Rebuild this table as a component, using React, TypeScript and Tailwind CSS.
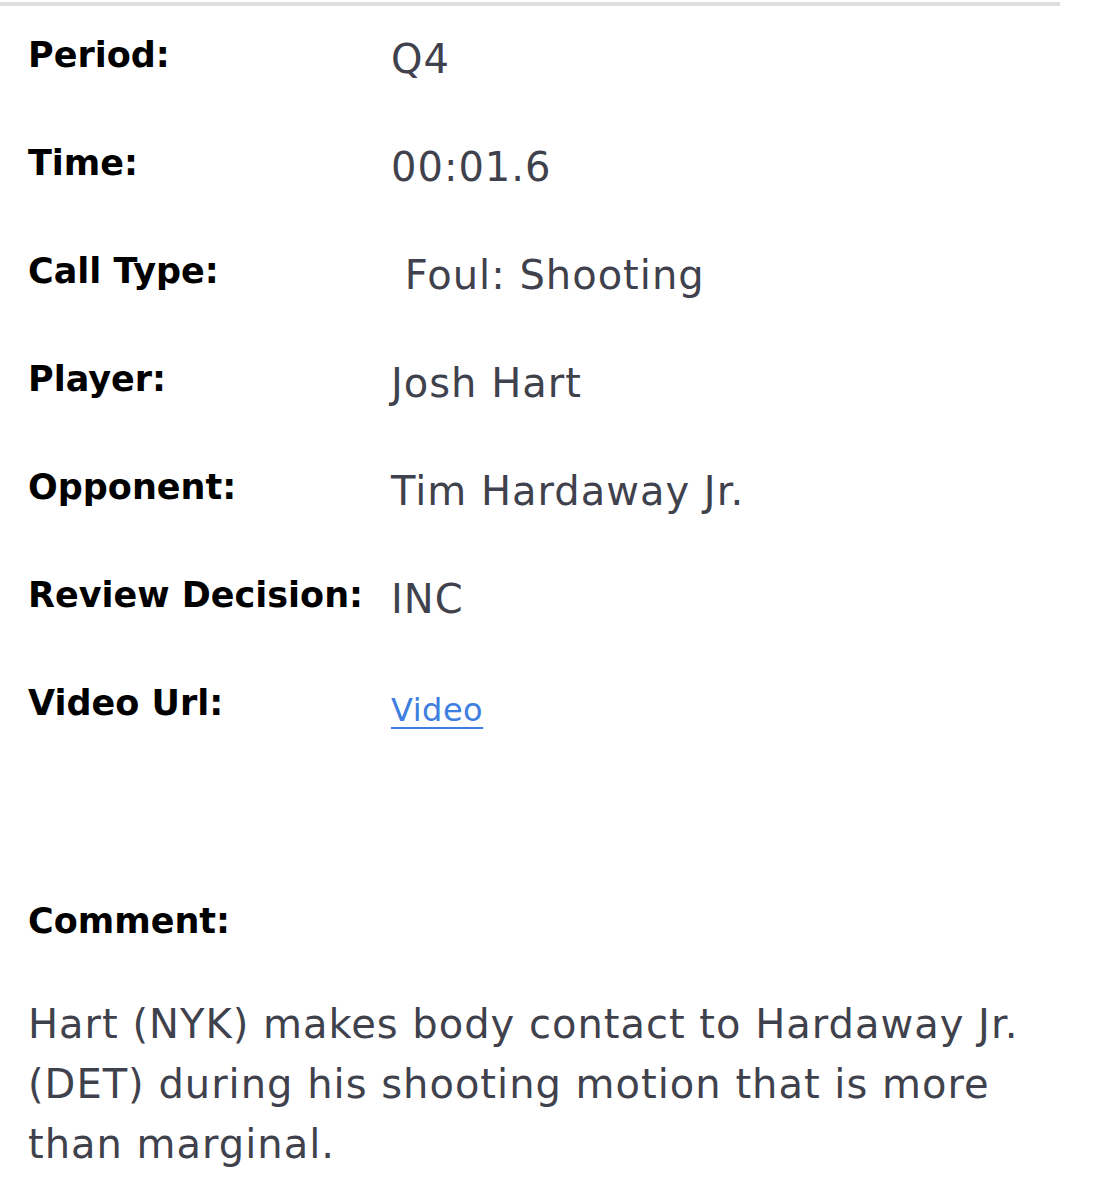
const rows: { label: string; value: string; link?: boolean }[] = [
  { label: "Period:", value: "Q4" },
  { label: "Time:", value: "00:01.6" },
  { label: "Call Type:", value: "\u00a0Foul: Shooting" },
  { label: "Player:", value: "Josh Hart" },
  { label: "Opponent:", value: "Tim Hardaway Jr." },
  { label: "Review Decision:", value: "INC" },
  { label: "Video Url:", value: "Video", link: true },
];

function DetailRow({ label, value, link }: { label: string; value: string; link?: boolean }) {
  return (
    <div className="flex h-[108px] items-start">
      <div className="w-[363px] shrink-0 text-[35px] leading-[44px] font-bold text-black">{label}</div>
      {link ? (
        <a
          href="#"
          className="mt-[9px] text-[32px] leading-[40px] tracking-[0.5px] text-[#3d7ee0] underline decoration-2 underline-offset-[6px]"
        >
          {value}
        </a>
      ) : (
        <div className="mt-[2px] text-[40px] leading-[48px] tracking-[1px] text-[#3f424c]">{value}</div>
      )}
    </div>
  );
}

export default function App() {
  return (
    <div className="min-h-[1190px] bg-white font-['DejaVu_Sans',sans-serif]">
      <div className="pt-0.5">
        <div className="h-1 w-[1060px] bg-[#dedede]" />
      </div>
      <div className="px-7 pt-[27px]">
        {rows.map((r) => (
          <DetailRow key={r.label} {...r} />
        ))}
        <div className="mt-[110px] text-[35px] leading-[44px] font-bold text-black">Comment:</div>
        <p className="mt-[51px] w-[1040px] text-[40px] leading-[60px] tracking-[1px] text-[#3f424c]">
          Hart (NYK) makes body contact to Hardaway Jr. (DET) during his shooting motion that is more than marginal.
        </p>
      </div>
    </div>
  );
}
